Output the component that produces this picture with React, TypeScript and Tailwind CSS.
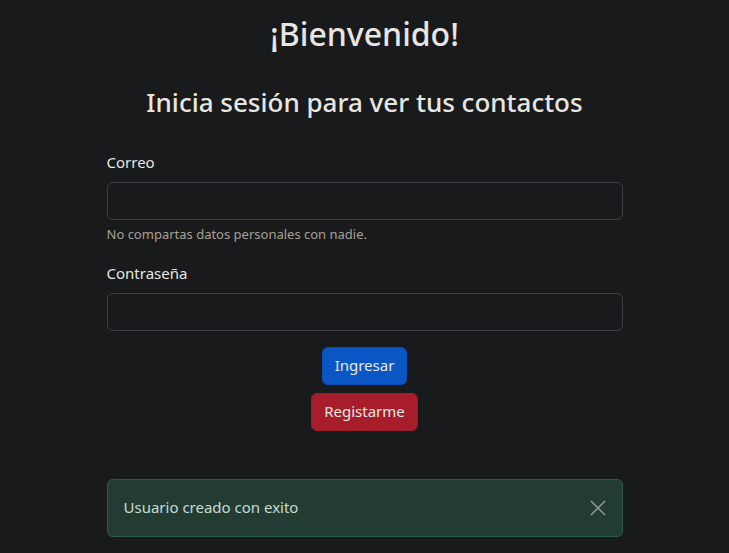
import { useState } from 'react';

export default function App() {
  const [showAlert, setShowAlert] = useState(true);

  return (
    <div className="min-h-screen bg-[#181a1b] text-[#e8e6e3] font-['Noto_Sans',sans-serif]">
      <div className="w-[516px] mx-auto">
        <h1 className="pt-[15px] text-center text-[32px] leading-[1.2] font-medium">¡Bienvenido!</h1>
        <h2 className="mt-[34px] text-center text-[26px] leading-[1.2] font-medium">Inicia sesión para ver tus contactos</h2>

        <form className="mt-[31px]" onSubmit={(e) => e.preventDefault()}>
          {/* Correo */}
          <label className="block text-[15px] leading-6 mb-2">Correo</label>
          <input
            type="email"
            className="block w-full h-[38px] rounded-md border border-[#3c4144] bg-[#181a1b] px-3 outline-none"
          />
          <p className="mt-1 text-[13px] leading-[21px] text-[#a8a095]">No compartas datos personales con nadie.</p>

          {/* Contraseña */}
          <label className="block mt-[16px] text-[15px] leading-6 mb-2">Contraseña</label>
          <input
            type="password"
            className="block w-full h-[38px] rounded-md border border-[#3c4144] bg-[#181a1b] px-3 outline-none"
          />

          <div className="mt-[16px] flex flex-col items-center gap-2">
            <button className="h-[38px] px-3 rounded-md border border-[#0a4fb5] bg-[#0a56c5] text-[15px] text-[#e8e6e3]">
              Ingresar
            </button>
            <button className="h-[38px] px-3 rounded-md border border-[#9b1d29] bg-[#a71d2c] text-[15px] text-[#e8e6e3]">
              Registarme
            </button>
          </div>
        </form>

        {showAlert && (
          <div className="mt-[48px] flex items-center justify-between h-[58px] rounded-md border border-[#2d5c46] bg-[#223c34] pl-4 pr-4 text-[#c7dccf]">
            <span className="text-[15px]">Usuario creado con exito</span>
            <button onClick={() => setShowAlert(false)} className="w-4 h-4 flex items-center justify-center text-[#8a958f]">
              <svg viewBox="0 0 16 16" className="w-4 h-4" fill="none" stroke="currentColor" strokeWidth="1.6">
                <path d="M1 1l14 14M15 1L1 15" />
              </svg>
            </button>
          </div>
        )}
      </div>
    </div>
  );
}
